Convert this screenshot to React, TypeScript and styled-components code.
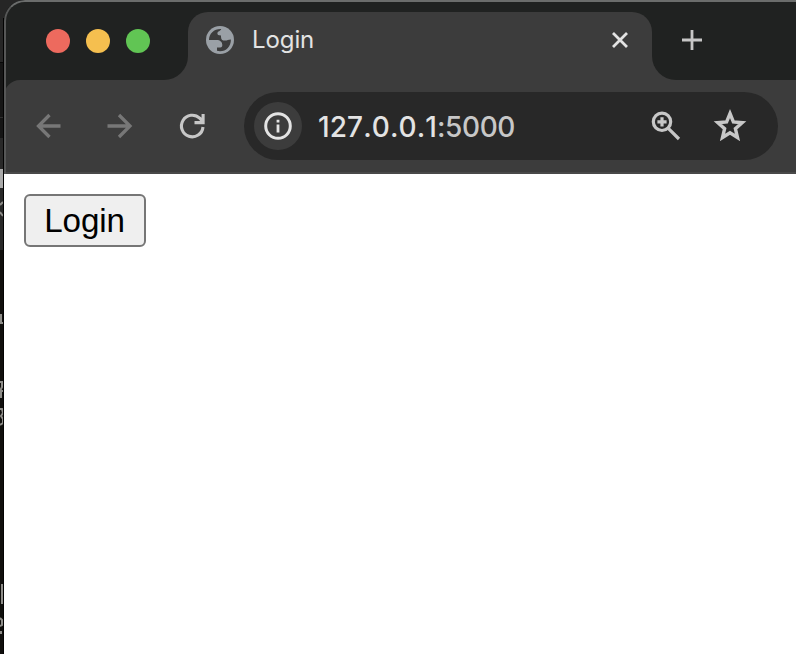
import React from "react";
import styled, { createGlobalStyle } from "styled-components";

const strip = "#202221";
const surface = "#3c3c3c";

const GlobalStyle = createGlobalStyle`
  * { box-sizing: border-box; }
  html, body { margin: 0; overflow: hidden; background: #100f0d; }
`;

const Desktop = styled.div`
  display: flex;
  width: 796px;
  height: 654px;
  overflow: hidden;
  background: linear-gradient(#262626 0 62px, #080808 62px 63px, #161616 63px 117px, #303030 117px 118px, #151515 118px 138px, #292929 138px 250px, #100f0d 250px);
`;

const BackgroundEdge = styled.svg`
  flex: none;
  display: block;
  width: 4px;
  height: 654px;
`;

const BrowserWindow = styled.div`
  position: relative;
  flex: 1;
  display: flex;
  flex-direction: column;
  overflow: hidden;
  border-top-left-radius: 21px;
  background: ${strip};
`;

const WindowRim = styled.div`
  position: absolute;
  inset: 0 -4px auto 0;
  height: 174px;
  border: solid #6b6d6c;
  border-width: 2px 0 0 2px;
  border-left-color: #565757;
  border-top-left-radius: 21px;
  pointer-events: none;
`;

const TabStrip = styled.div`
  flex: none;
  display: flex;
  height: 80px;
  background: ${surface};
`;

const WindowControls = styled.div`
  display: flex;
  gap: 16px;
  width: 184px;
  padding: 29px 0 0 42px;
  background: ${strip};
  border-bottom-right-radius: 24px;
`;

const Light = styled.span<{ $color: string }>`
  width: 24px;
  height: 24px;
  border-radius: 50%;
  background: ${(p) => p.$color};
`;

const TabSlot = styled.div`
  width: 464px;
  padding-top: 12px;
  background: linear-gradient(${strip} 0 40px, ${surface} 40px);
`;

const Tab = styled.div`
  display: flex;
  align-items: center;
  height: 56px;
  padding: 0 22px 0 18px;
  border-radius: 20px 20px 0 0;
  background: ${surface};
`;

const TabTitle = styled.span`
  flex: 1;
  margin-left: 18px;
  color: #e3e3e3;
  font: 400 24px/30px Inter, sans-serif;
  letter-spacing: -0.1px;
`;

const NewTabArea = styled.div`
  flex: 1;
  padding: 30px 0 0 30px;
  background: ${strip};
  border-bottom-left-radius: 24px;
`;

const Toolbar = styled.div`
  flex: none;
  display: flex;
  align-items: center;
  height: 94px;
  padding: 0 18px 0 31px;
  border-bottom: 2px solid #494949;
  border-top-left-radius: 16px;
  background: ${surface};
`;

const Navigation = styled.div`
  display: flex;
  gap: 46px;
  width: 209px;
`;

const Glyph = styled.svg`
  display: block;
  flex: none;
  overflow: visible;
`;

const AddressBar = styled.div`
  flex: 1;
  display: flex;
  align-items: center;
  height: 68px;
  padding: 0 32px 0 10px;
  border-radius: 34px;
  background: #282828;
`;

const SiteInfo = styled.div`
  display: grid;
  place-items: center;
  width: 48px;
  height: 48px;
  border-radius: 50%;
  background: ${surface};
`;

const Address = styled.span`
  flex: 1;
  margin-left: 16px;
  padding-top: 1px;
  color: #e3e3e3;
  font: 450 28px/36px Inter, sans-serif;
  font-kerning: none;
  letter-spacing: 0.1px;
  white-space: nowrap;
`;

const Port = styled.span`
  color: #c7c7c7;
  letter-spacing: -0.4px;
`;

const AddressActions = styled.div`
  display: flex;
  align-items: center;
  gap: 34px;
`;

const Page = styled.main`
  flex: 1;
  padding: 20px;
  background: #fff;
`;

const LoginButton = styled.button`
  display: block;
  width: 122px;
  height: 53px;
  padding: 1px 1px 0 0;
  border: 2px solid #767676;
  border-radius: 6px;
  background: #efefef;
  color: #000;
  font: 400 33.2px/48px "Liberation Sans", Arial, sans-serif;
  letter-spacing: -0.15px;
`;

export default function App() {
  return (
    <>
      <GlobalStyle />
      <Desktop>
        <BackgroundEdge viewBox="0 0 4 654" aria-hidden="true">
          <path d="M0 169h3v19H0z" fill="#aaa" />
          <path d="M0 205l3-3M0 212l3 4M1 314v9h2M0 382h2v5l-2 4h3M1 391v7M0 409h2l1 4-2 3 2 3v4l-3 2M0 618l2 2v5l-2 1" fill="none" stroke="#8e8d89" strokeWidth="2" />
          <path d="M1 584h2v20H1zM0 631h2v3H0z" fill="#8e8d89" />
          <path d="M3.5 18v636" stroke="#020202" />
        </BackgroundEdge>
        <BrowserWindow>
          <TabStrip>
            <WindowControls>
              <Light $color="#ed6a5e" />
              <Light $color="#f5bf4f" />
              <Light $color="#61c554" />
            </WindowControls>
            <TabSlot>
              <Tab>
                <Glyph width="28" height="28" viewBox="0 0 28 28">
                  <circle cx="14" cy="14" r="14" fill="#9aa0a6" />
                  <path d="M3 14C3 7.5 8 2.7 15.2 2.9c-.5 2.3-3.8 2-3.8 4.5 0 1.3.9 2 3.6 2v1.3c0 2.8 1.2 3.9 4 3.9 2.6 0 3-1.2 5.9-1.2C25 20.5 20.2 25.2 14 25.2c-1.1 0-2-.1-3-.4v-3.3h3.3c1.5 0 2-.8 2-2.4 0-3.1-2.1-5.1-5.8-5.1z" fill={surface} />
                </Glyph>
                <TabTitle>Login</TabTitle>
                <Glyph width="20" height="20" viewBox="0 0 20 20" fill="none" stroke="#e3e3e3" strokeWidth="2.8">
                  <path d="M3 3l14 14M17 3L3 17" />
                </Glyph>
              </Tab>
            </TabSlot>
            <NewTabArea>
              <Glyph width="20" height="20" viewBox="0 0 20 20" fill="none" stroke="#c7c7c7" strokeWidth="2.8">
                <path d="M10 0v20M0 10h20" />
              </Glyph>
            </NewTabArea>
          </TabStrip>
          <Toolbar>
            <Navigation>
              <Glyph width="26" height="26" viewBox="0 0 26 26" fill="none" stroke="#777" strokeWidth="3.3">
                <path d="M25.5 13H3.500M14.500 2L3.500 13l11 11" />
              </Glyph>
              <Glyph width="26" height="26" viewBox="0 0 26 26" fill="none" stroke="#777" strokeWidth="3.3">
                <path d="M.5 13h22M12 2l11 11-11 11" />
              </Glyph>
              <Glyph width="26" height="26" viewBox="0 0 26 26" fill="none" stroke="#c7c7c7" strokeWidth="3.1">
                <path d="M24 14A10.8 10.8 0 1 1 20.7 5.2L24 8.8M24.1 1v8.6H15.5" />
              </Glyph>
            </Navigation>
            <AddressBar>
              <SiteInfo>
                <Glyph width="28" height="28" viewBox="0 0 28 28">
                  <circle cx="14" cy="14" r="12.3" fill="none" stroke="#e3e3e3" strokeWidth="3" />
                  <path d="M12.6 12.5h2.8v8h-2.8zM12.6 7.7h2.8v2.8h-2.8z" fill="#e3e3e3" />
                </Glyph>
              </SiteInfo>
              <Address>127.0.0.1<Port>:5000</Port></Address>
              <AddressActions>
                <Glyph width="28" height="28" viewBox="0 0 28 28" fill="none" stroke="#c7c7c7" strokeWidth="3.2">
                  <circle cx="10" cy="9.8" r="8.7" />
                  <path d="M16.3 16.3L27 27M10 5.2v9.2M5.4 9.8h9.2" />
                </Glyph>
                <Glyph width="32" height="32" viewBox="0 0 32 32" fill="none" stroke="#c7c7c7" strokeWidth="3.4">
                  <path d="M16 3.5l3.4 8.5 8.8.7-6.8 6 2.1 8.8-7.5-4.7-7.5 4.7 2.1-8.8-6.8-6 8.8-.7z" />
                </Glyph>
              </AddressActions>
            </AddressBar>
          </Toolbar>
          <Page>
            <LoginButton type="button">Login</LoginButton>
          </Page>
          <WindowRim />
        </BrowserWindow>
      </Desktop>
    </>
  );
}
